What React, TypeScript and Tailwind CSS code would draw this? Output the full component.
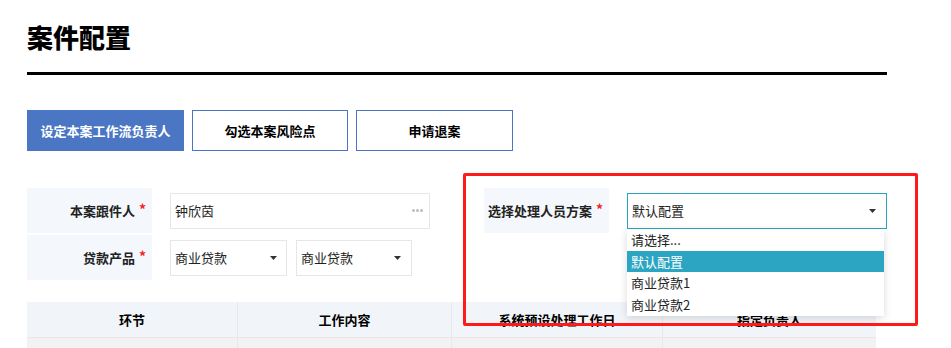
import React from "react";

const Caret = () => (
  <svg width="7" height="4" viewBox="0 0 7 4" className="shrink-0">
    <path d="M0 0 L7 0 L3.5 4 Z" fill="#333" />
  </svg>
);

const Label = ({ text }: { text: string }) => (
  <div className="w-[125px] h-[45px] bg-[#f4f8fc] flex items-center justify-end pr-[6px] text-[13px] font-bold text-[#222]">
    <span>{text}</span>
    <span className="text-[#f5222d] ml-[4px] font-bold text-[14px] relative top-[-1px]">*</span>
  </div>
);

export default function App() {
  return (
    <div
      className="relative w-[951px] h-[348px] overflow-hidden bg-white pl-[27px] text-[#222]"
      style={{ fontFamily: '"Noto Sans CJK SC", "Noto Sans", sans-serif' }}
    >
      <div className="w-[860px]">
        <div className="pt-[19px] h-[55px] leading-[36px] text-[26px] font-black text-black">案件配置</div>
        <div className="mt-[17px] h-[3px] bg-black" />
        <div className="mt-[35px] flex gap-[8px]">
          <div className="w-[157px] h-[41px] bg-[#4a76c3] text-white text-[13px] font-bold flex items-center justify-center">
            设定本案工作流负责人
          </div>
          <div className="w-[156px] h-[41px] border border-[#4a76c3] text-[13px] font-bold flex items-center justify-center text-black">
            勾选本案风险点
          </div>
          <div className="w-[157px] h-[41px] border border-[#4a76c3] text-[13px] font-bold flex items-center justify-center text-black">
            申请退案
          </div>
        </div>

        <div className="mt-[37px] flex gap-[54px]">
          <div className="w-[403px] flex flex-col gap-[2px]">
            <div className="flex items-center gap-[18px]">
              <Label text="本案跟件人" />
              <div className="w-[260px] h-[36px] border border-[#e6e6e6] flex items-center justify-between pl-[4px] pr-[6px] text-[13px]">
                <span>钟欣茵</span>
                <span className="flex gap-[1px]">
                  <span className="w-[3px] h-[3px] rounded-full bg-[#bdbdbd]" />
                  <span className="w-[3px] h-[3px] rounded-full bg-[#bdbdbd]" />
                  <span className="w-[3px] h-[3px] rounded-full bg-[#bdbdbd]" />
                </span>
              </div>
            </div>
            <div className="flex items-center gap-[18px]">
              <Label text="贷款产品" />
              <div className="flex gap-[9px]">
                <div className="w-[117px] h-[36px] border border-[#e6e6e6] flex items-center justify-between pl-[4px] pr-[9px] text-[13px]">
                  <span>商业贷款</span>
                  <Caret />
                </div>
                <div className="w-[116px] h-[36px] border border-[#e6e6e6] flex items-center justify-between pl-[4px] pr-[10px] text-[13px]">
                  <span>商业贷款</span>
                  <Caret />
                </div>
              </div>
            </div>
          </div>

          <div className="w-[403px] flex flex-col">
            <div className="flex items-center gap-[18px]">
              <Label text="选择处理人员方案" />
              <div className="relative w-[260px] h-[36px]">
                <div className="w-full h-full border border-[#2aa5c0] flex items-center justify-between pl-[4px] pr-[10px] text-[13px]">
                  <span>默认配置</span>
                  <Caret />
                </div>
                <div className="absolute left-0 top-[36px] w-[257px] bg-white shadow-[0_2px_8px_rgba(0,0,0,0.15)] z-10 text-[13px] text-[#222]">
                  <div className="h-[22px] leading-[22px] pl-[4px]">请选择...</div>
                  <div className="h-[21px] leading-[21px] pl-[4px] bg-[#2ba5c1] text-white">默认配置</div>
                  <div className="h-[22px] leading-[22px] pl-[4px]">商业贷款1</div>
                  <div className="h-[22px] leading-[22px] pl-[4px]">商业贷款2</div>
                </div>
              </div>
            </div>
          </div>
        </div>

        <div className="mt-[22px] w-[849px]">
          <div className="grid grid-cols-[211px_214px_211px_213px] h-[36px] bg-[#f1f5f9] border-b border-[#e8e8e8] text-[13px] font-bold text-black">
            <div className="flex items-center justify-center border-r border-[#e6eaee]">环节</div>
            <div className="flex items-center justify-center border-r border-[#e6eaee]">工作内容</div>
            <div className="flex items-center justify-center border-r border-[#e6eaee]">系统预设处理工作日</div>
            <div className="flex items-center justify-center">指定负责人</div>
          </div>
          <div className="grid grid-cols-[211px_214px_211px_213px] h-[20px] bg-[#f2f2f2]">
            <div className="border-r border-[#e8e8e8]" />
            <div className="border-r border-[#e8e8e8]" />
            <div className="border-r border-[#e8e8e8]" />
            <div />
          </div>
        </div>
      </div>

      <div className="absolute left-[463px] top-[173px] w-[455px] h-[153px] border-[3px] border-[#ff1a1a] rounded-[2px] z-20 pointer-events-none" />
    </div>
  );
}
